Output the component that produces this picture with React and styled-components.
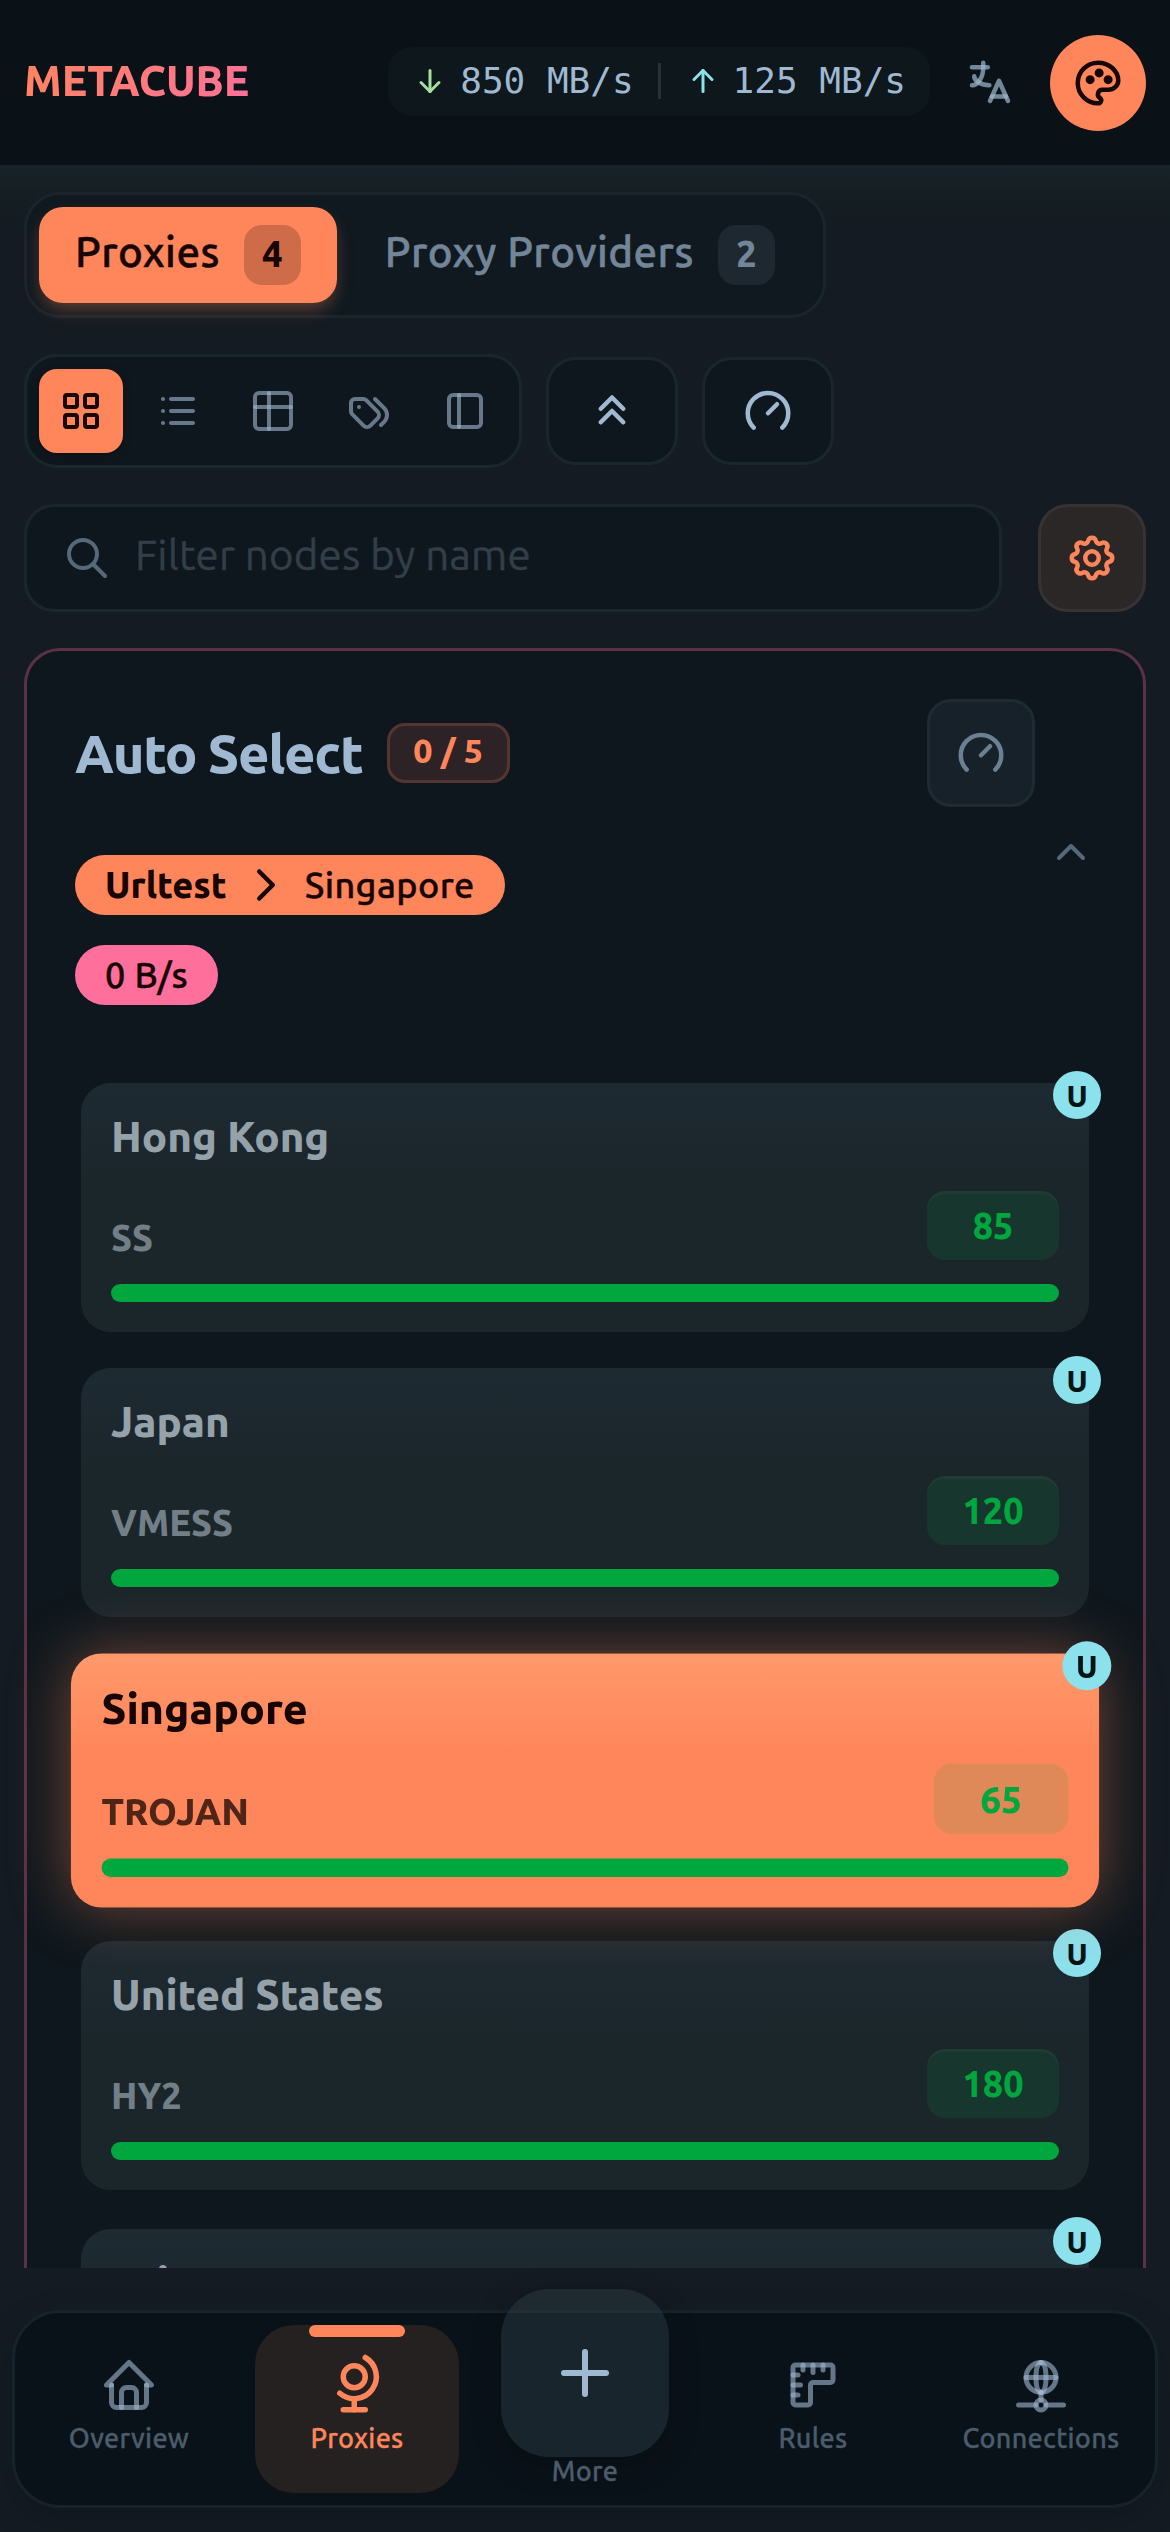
import {useState} from "react";
import styled, {createGlobalStyle, css} from "styled-components";
import {
    TbArrowDown,
    TbArrowUp,
    TbBrandSpeedtest,
    TbChevronRight,
    TbChevronUp,
    TbChevronsUp,
    TbGlobe,
    TbHome,
    TbLanguage,
    TbLayoutGrid,
    TbLayoutSidebar,
    TbList,
    TbNetwork,
    TbPalette,
    TbPlus,
    TbRuler,
    TbSearch,
    TbSettings,
    TbTable,
    TbTags,
} from "react-icons/tb";

const tabs = [
    {id: 'proxies', title: 'Proxies', count: 4},
    {id: 'providers', title: 'Proxy Providers', count: 2},
]

const views = [
    {id: 'grid', Icon: TbLayoutGrid},
    {id: 'list', Icon: TbList},
    {id: 'table', Icon: TbTable},
    {id: 'tags', Icon: TbTags},
    {id: 'sidebar', Icon: TbLayoutSidebar},
]

const nodes = [
    {name: 'Hong Kong', type: 'SS', delay: 85},
    {name: 'Japan', type: 'VMESS', delay: 120},
    {name: 'Singapore', type: 'TROJAN', delay: 65},
    {name: 'United States', type: 'HY2', delay: 180},
    {name: 'Taiwan', type: 'VLESS', delay: 95},
]

const GlobalStyle = createGlobalStyle`
    * {
        box-sizing: border-box;
    }

    body {
        margin: 0;
        background: #141b22;
        color: #a0b9d2;
        font-family: Ubuntu, "Noto Sans", sans-serif;
    }

    button, input {
        margin: 0;
        padding: 0;
        border: none;
        background: none;
        color: inherit;
        font: inherit;
    }

    svg {
        display: block;
        flex-shrink: 0;
    }
`

const Page = styled.div`
    display: flex;
    flex-direction: column;
    width: 1170px;
    height: 2532px;
    overflow: hidden;
`

const Header = styled.header`
    display: flex;
    align-items: center;
    gap: 12px;
    height: 168px;
    flex-shrink: 0;
    padding: 0 24px;
    background: #0a1218;
    border-bottom: 3px solid #18222a;
`

const Logo = styled.div`
    margin: -4px auto 0 0;
    font-size: 42px;
    font-weight: 800;
    line-height: 60px;
    background: linear-gradient(135deg, #ff865b, #fd6f9c);
    background-clip: text;
    -webkit-text-fill-color: transparent;
`

const Speed = styled.div`
    display: flex;
    align-items: center;
    gap: 24px;
    height: 69px;
    margin-top: -3px;
    padding: 0 24px;
    border-radius: 24px;
    background: #0d171c;
    font-family: "DejaVu Sans Mono", monospace;
    font-size: 36px;
    line-height: 48px;
`

const SpeedItem = styled.div`
    display: flex;
    align-items: center;
    gap: 12px;
    white-space: nowrap;

    svg {
        color: ${({$color}) => $color};
    }
`

const SpeedDivider = styled.span`
    width: 3px;
    height: 36px;
    background: #26323a;
`

const RoundButton = styled.button`
    display: flex;
    align-items: center;
    justify-content: center;
    width: 96px;
    height: 96px;
    border-radius: 50%;
    color: ${({$filled}) => $filled ? '#160503' : 'rgba(160, 185, 210, .7)'};
    background: ${({$filled}) => $filled ? '#ff865b' : 'transparent'};
`

const Content = styled.main`
    display: flex;
    flex-direction: column;
    align-items: flex-start;
    height: 2100px;
    flex-shrink: 0;
    padding: 24px 24px 0;
    overflow: hidden;
    background: linear-gradient(#18222a, #141e23 24px, #141b22 72px);
`

const Tabs = styled.div`
    display: flex;
    gap: 12px;
    padding: 12px;
    border: 3px solid #1a242c;
    border-radius: 36px;
    background: #0f191f;
`

const Tab = styled.button`
    display: flex;
    align-items: baseline;
    gap: 24px;
    height: 96px;
    padding: 18px 36px;
    border-radius: 24px;
    font-size: 42px;
    font-weight: 500;
    line-height: 48px;
    letter-spacing: 0.45px;
    -webkit-text-stroke: 0.5px;
    white-space: nowrap;
    color: #738699;

    ${({$active}) => $active && css`
        color: #160503;
        background: #ff865b;
        box-shadow: 0 9px 18px -3px rgba(255, 134, 91, .35);
    `}
`

const TabCount = styled.span`
    display: inline-block;
    width: 57px;
    height: 60px;
    border-radius: 18px;
    font-size: 36px;
    font-weight: 800;
    line-height: 58px;
    letter-spacing: 0;
    -webkit-text-stroke: 0;
    text-align: center;
    background: ${({$active}) => $active ? '#ce6c49' : '#1d2830'};
`

const Toolbar = styled.div`
    display: flex;
    align-items: center;
    gap: 24px;
    margin-top: 36px;
`

const ViewSwitch = styled.div`
    display: flex;
    gap: 12px;
    padding: 12px;
    border: 3px solid #1a262d;
    border-radius: 33px;
    background: #0f171e;
`

const ViewButton = styled.button`
    display: flex;
    align-items: center;
    justify-content: center;
    width: 84px;
    height: 84px;
    border-radius: 18px;
    color: ${({$active}) => $active ? '#160503' : 'rgba(160, 185, 210, .6)'};
    background: ${({$active}) => $active ? '#ff865b' : 'transparent'};
    box-shadow: ${({$active}) => $active ? '0 3px 9px rgba(0, 0, 0, .3)' : 'none'};
`

const ToolButton = styled.button`
    display: flex;
    align-items: center;
    justify-content: center;
    width: 132px;
    height: 108px;
    border: 3px solid #1a262d;
    border-radius: 30px;
    background: #0f171e;
`

const FilterRow = styled.div`
    display: flex;
    gap: 36px;
    width: 100%;
    margin-top: 36px;
`

const Search = styled.label`
    display: flex;
    align-items: center;
    gap: 24px;
    flex: 1;
    height: 108px;
    padding: 0 36px;
    border: 3px solid #1a262d;
    border-radius: 30px;
    background: #0f171e;
    color: #56697a;
`

const SearchInput = styled.input`
    flex: 1;
    min-width: 0;
    padding-bottom: 7px;
    outline: none;
    font-size: 42px;
    font-weight: 400;
    line-height: 60px;
    letter-spacing: 0.2px;

    &::placeholder {
        color: #323f49;
        opacity: 1;
        -webkit-text-stroke: 0.4px;
    }
`

const SettingsButton = styled(ToolButton)`
    width: 108px;
    border-color: #373234;
    background: #2b2727;
    color: #ff865b;
`

const Group = styled.section`
    width: 100%;
    flex-shrink: 0;
    margin-top: 36px;
    border: 3px solid #5b3145;
    border-radius: 36px;
    background: #0e171d;
`

const GroupHeader = styled.div`
    display: flex;
    align-items: center;
    gap: 12px;
    padding: 48px;

    & > svg {
        color: #56697a;
    }
`

const GroupInfo = styled.div`
    display: flex;
    flex-direction: column;
    align-items: flex-start;
    gap: 30px;
    flex: 1;
`

const GroupTitleRow = styled.div`
    display: flex;
    align-items: center;
    gap: 24px;
    width: 100%;
    margin-bottom: 18px;
`

const GroupTitle = styled.h2`
    margin: 0;
    font-size: 54px;
    font-weight: 800;
    line-height: 72px;
    letter-spacing: -1.3px;
    white-space: nowrap;
`

const GroupCount = styled.span`
    width: 123px;
    height: 60px;
    border: 3px solid #563530;
    border-radius: 18px;
    background: #2d2326;
    color: #ff865b;
    font-size: 34px;
    font-weight: 800;
    line-height: 48px;
    text-align: center;
`

const TestButton = styled(ToolButton)`
    width: 108px;
    margin-left: auto;
    border-color: #1f2b33;
    border-radius: 24px;
    background: #172129;
    color: #6b8092;
`

const Pill = styled.div`
    display: flex;
    align-items: center;
    gap: 12px;
    height: 60px;
    padding: 0 30px;
    border-radius: 30px;
    background: ${({$color}) => $color};
    color: #160503;
    font-size: 36px;
    font-weight: 500;
    line-height: 48px;
    letter-spacing: 0.4px;
    -webkit-text-stroke: 0.4px;
    white-space: nowrap;

    b {
        font-weight: 800;
        letter-spacing: 0;
        -webkit-text-stroke: 0;
    }
`

const NodeList = styled.div`
    display: grid;
    grid-template-rows: 249px 252px 249px 252px 249px;
    align-items: start;
    row-gap: 36px;
    padding: 30px 54px;
`

const NodeName = styled.div`
    margin-bottom: 30px;
    font-size: 42px;
    font-weight: 800;
    line-height: 48px;
    color: #96a2aa;
`

const NodeMeta = styled.div`
    display: flex;
    align-items: flex-end;
    justify-content: space-between;
    margin-bottom: 24px;
`

const NodeType = styled.span`
    font-size: 36px;
    font-weight: 800;
    line-height: 45px;
    color: #727f87;
`

const NodeDelay = styled.span`
    width: 132px;
    height: 69px;
    border-radius: 18px;
    background: rgba(0, 166, 62, .13);
    box-shadow: inset 0 3px 0 rgba(255, 255, 255, .03);
    color: #00a63e;
    font-size: 36px;
    font-weight: 800;
    line-height: 69px;
    text-align: center;
`

const NodeBar = styled.div`
    height: 18px;
    border-radius: 9px;
    background: #00a63e;
`

const NodeMark = styled.span`
    position: absolute;
    top: -12px;
    right: -12px;
    width: 48px;
    height: 48px;
    border-radius: 50%;
    background: #8be1ec;
    color: #041313;
    font-size: 30px;
    font-weight: 800;
    line-height: 50px;
    text-align: center;
`

const Node = styled.article`
    position: relative;
    height: 249px;
    padding: 30px;
    border-radius: 30px;
    background: linear-gradient(#1e2a32, #1b262b 40%);

    ${({$selected}) => $selected && css`
        z-index: 1;
        transform: scale(1.02);
        background: linear-gradient(#ff996b, #ff865b 38%);
        box-shadow: 0 0 60px rgba(255, 134, 91, .42);

        ${NodeName} {
            color: #160503;
        }

        ${NodeType} {
            color: #4f2517;
        }

        ${NodeDelay} {
            box-shadow: none;
        }
    `}
`

const Nav = styled.nav`
    display: flex;
    gap: 24px;
    height: 198px;
    flex-shrink: 0;
    margin: 42px 12px 24px;
    padding: 12px;
    border: 3px solid #17232b;
    border-radius: 48px;
    background: #0a1219;
    box-shadow: 0 12px 36px rgba(0, 0, 0, .15);
`

const NavItem = styled.a`
    position: relative;
    display: flex;
    flex-direction: column;
    align-items: center;
    gap: 5px;
    width: 204px;
    height: 168px;
    padding-top: 30px;
    border-radius: 39px;
    color: #4c5c6b;
    font-size: 27px;
    font-weight: 500;
    line-height: 36px;
    letter-spacing: 0.3px;
    -webkit-text-stroke: 0.3px;

    svg {
        color: rgba(160, 185, 210, .6);
    }

    ${({$active}) => $active && css`
        background: #242120;
        color: #ff865b;

        svg {
            color: #ff865b;
            transform: scale(1.1);
        }

        &::before {
            content: '';
            position: absolute;
            top: 0;
            left: 54px;
            width: 96px;
            height: 12px;
            border-radius: 6px;
            background: #ff865b;
        }
    `}
`

const MoreItem = styled(NavItem)`
    gap: 0;
    padding-top: 0;
`

const MoreButton = styled.span`
    display: flex;
    align-items: center;
    justify-content: center;
    width: 168px;
    height: 168px;
    margin: -36px 0 -4px;
    flex-shrink: 0;
    border-radius: 48px;
    background: rgba(44, 60, 68, .46);
    box-shadow: 0 9px 30px rgba(0, 0, 0, .25);

    svg {
        color: #a0b9d2;
    }
`

function ProxyNode({node, selected, onClick}) {
    return (
        <Node $selected={selected} onClick={onClick}>
            <NodeName>{node.name}</NodeName>
            <NodeMeta>
                <NodeType>{node.type}</NodeType>
                <NodeDelay>{node.delay}</NodeDelay>
            </NodeMeta>
            <NodeBar/>
            <NodeMark>U</NodeMark>
        </Node>
    )
}

function App() {
    const [tab, setTab] = useState('proxies');
    const [view, setView] = useState('grid');
    const [selected, setSelected] = useState('Singapore');

    return (
        <Page>
            <GlobalStyle/>
            <Header>
                <Logo>METACUBE</Logo>
                <Speed>
                    <SpeedItem $color="#a5dfa0"><TbArrowDown size={36}/>850 MB/s</SpeedItem>
                    <SpeedDivider/>
                    <SpeedItem $color="#8be1ec"><TbArrowUp size={36}/>125 MB/s</SpeedItem>
                </Speed>
                <RoundButton><TbLanguage size={54}/></RoundButton>
                <RoundButton $filled><TbPalette size={54}/></RoundButton>
            </Header>

            <Content>
                <Tabs>
                    {tabs.map((item) => (
                        <Tab key={item.id} $active={tab === item.id} onClick={() => setTab(item.id)}>
                            {item.title}
                            <TabCount $active={tab === item.id}>{item.count}</TabCount>
                        </Tab>
                    ))}
                </Tabs>

                <Toolbar>
                    <ViewSwitch>
                        {views.map(({id, Icon}) => (
                            <ViewButton key={id} $active={view === id} onClick={() => setView(id)}>
                                <Icon size={48}/>
                            </ViewButton>
                        ))}
                    </ViewSwitch>
                    <ToolButton><TbChevronsUp size={54}/></ToolButton>
                    <ToolButton><TbBrandSpeedtest size={54}/></ToolButton>
                </Toolbar>

                <FilterRow>
                    <Search>
                        <TbSearch size={48}/>
                        <SearchInput placeholder="Filter nodes by name"/>
                    </Search>
                    <SettingsButton><TbSettings size={54}/></SettingsButton>
                </FilterRow>

                <Group>
                    <GroupHeader>
                        <GroupInfo>
                            <GroupTitleRow>
                                <GroupTitle>Auto Select</GroupTitle>
                                <GroupCount>0 / 5</GroupCount>
                                <TestButton><TbBrandSpeedtest size={54}/></TestButton>
                            </GroupTitleRow>
                            <Pill $color="#ff865b">
                                <b>Urltest</b>
                                <TbChevronRight size={54}/>
                                <span>{selected}</span>
                            </Pill>
                            <Pill $color="#ff6f9c">0 B/s</Pill>
                        </GroupInfo>
                        <TbChevronUp size={48}/>
                    </GroupHeader>
                    <NodeList>
                        {nodes.map((node) => (
                            <ProxyNode
                                key={node.name}
                                node={node}
                                selected={selected === node.name}
                                onClick={() => setSelected(node.name)}
                            />
                        ))}
                    </NodeList>
                </Group>
            </Content>

            <Nav>
                <NavItem><TbHome size={60}/>Overview</NavItem>
                <NavItem $active><TbGlobe size={60}/>Proxies</NavItem>
                <MoreItem>
                    <MoreButton><TbPlus size={72}/></MoreButton>
                    More
                </MoreItem>
                <NavItem><TbRuler size={60}/>Rules</NavItem>
                <NavItem><TbNetwork size={60}/>Connections</NavItem>
            </Nav>
        </Page>
    )
}

export default App;
